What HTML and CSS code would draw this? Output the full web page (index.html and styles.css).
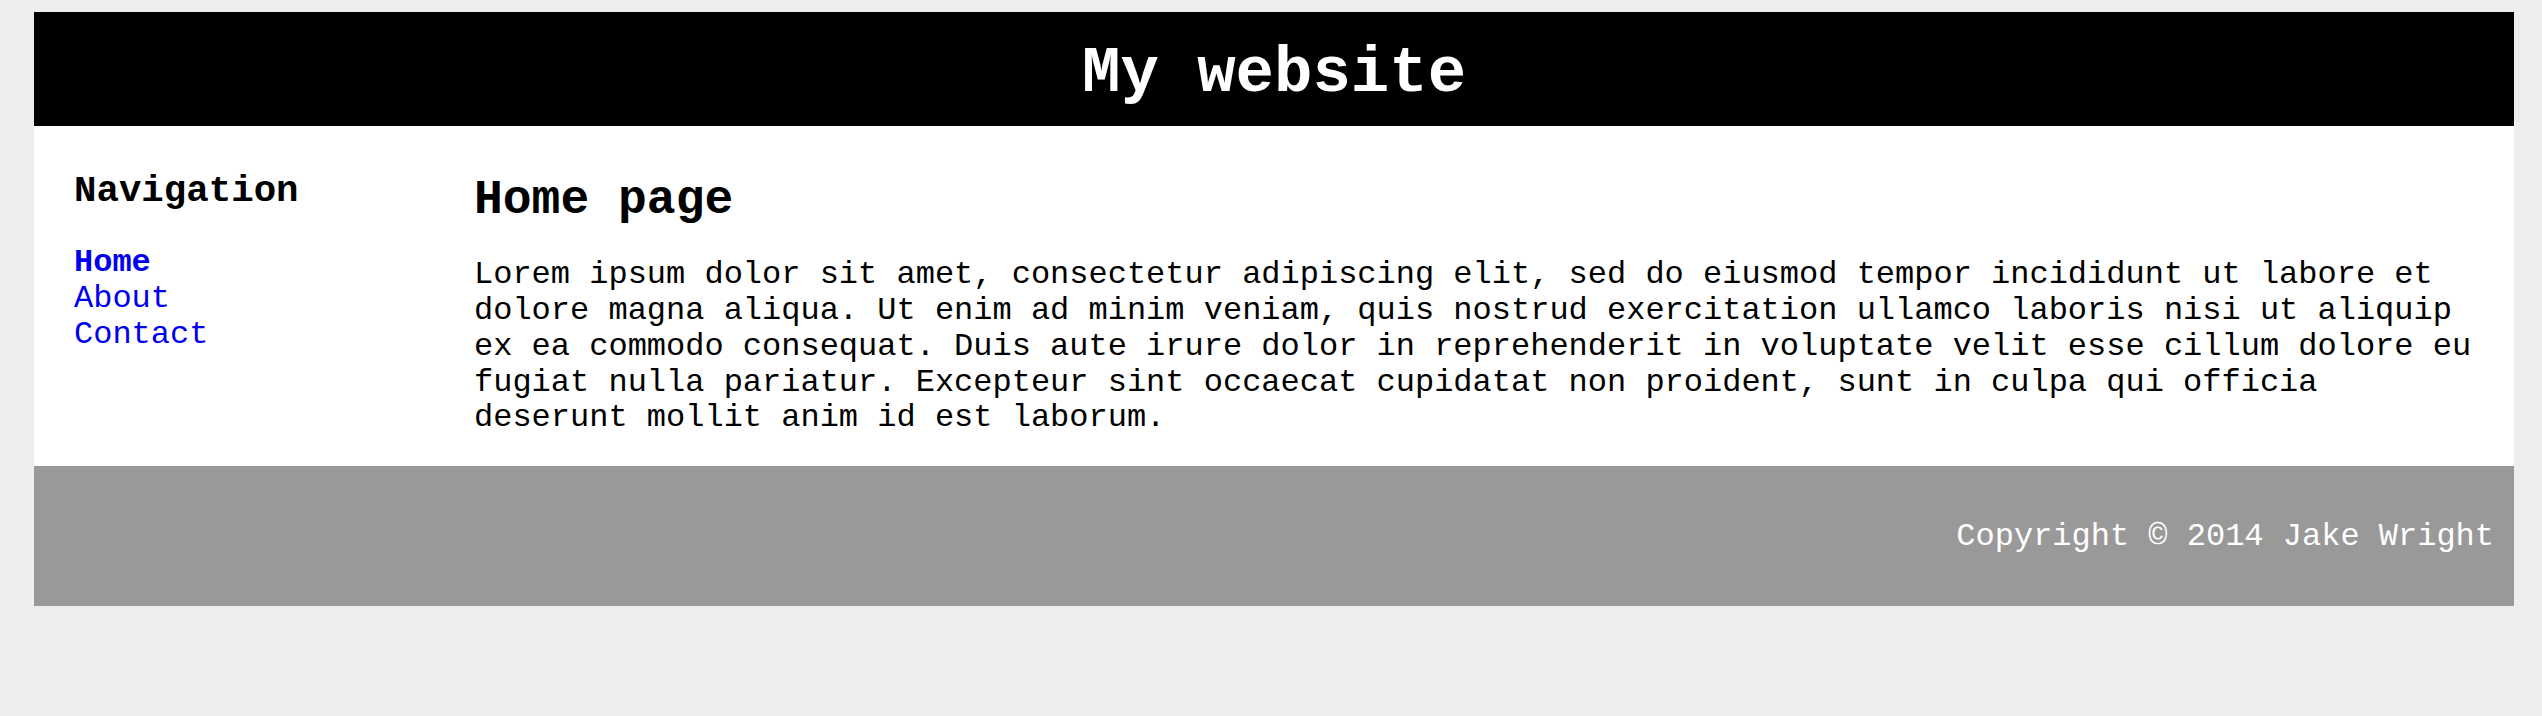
FILE: index.html
```html
<!DOCTYPE html>
<html lang="en">
<head>
<meta charset="utf-8">
<title>My website</title>
<link rel="stylesheet" href="styles.css">
</head>
<body>
<div class="container">
  <header class="site-header">
    <h1 class="site-title">My website</h1>
  </header>
  <div class="main">
    <nav class="sidebar">
      <h3 class="sidebar-title">Navigation</h3>
      <ul class="nav-list">
        <li><a class="nav-link active" href="#">Home</a></li>
        <li><a class="nav-link" href="#">About</a></li>
        <li><a class="nav-link" href="#">Contact</a></li>
      </ul>
    </nav>
    <section class="content">
      <h2 class="content-title">Home page</h2>
      <p class="content-text">Lorem ipsum dolor sit amet, consectetur adipiscing elit, sed do eiusmod tempor incididunt ut labore et dolore magna aliqua. Ut enim ad minim veniam, quis nostrud exercitation ullamco laboris nisi ut aliquip ex ea commodo consequat. Duis aute irure dolor in reprehenderit in voluptate velit esse cillum dolore eu fugiat nulla pariatur. Excepteur sint occaecat cupidatat non proident, sunt in culpa qui officia deserunt mollit anim id est laborum.</p>
    </section>
  </div>
  <footer class="site-footer">
    <p class="copyright">Copyright &copy; 2014 Jake Wright</p>
  </footer>
</div>
</body>
</html>
```

FILE: styles.css
```css
html, body {
  margin: 0;
  padding: 0;
}

body {
  background: #ededed;
  font-family: "Liberation Mono", "Courier New", monospace;
  font-size: 32px;
  line-height: 35.75px;
  color: #000;
}

.container {
  margin: 12px 28px 0 34px;
}

.site-header {
  background: #000;
  padding: 26px 0 16px;
}

.site-title {
  margin: 0;
  color: #fff;
  font-size: 64px;
  font-weight: bold;
  line-height: 72px;
  text-align: center;
}

.main {
  display: flex;
  background: #fff;
}

.sidebar {
  width: 400px;
  flex: 0 0 400px;
  box-sizing: border-box;
  padding: 0 0 0 40px;
}

.sidebar-title {
  margin: 44px 0 33px;
  font-size: 37.44px;
  font-weight: bold;
  line-height: 42.4px;
}

.nav-list {
  list-style: none;
  margin: 0;
  padding: 0;
}

.nav-link {
  color: #0000ee;
  text-decoration: none;
}

.nav-link.active {
  font-weight: bold;
}

.content {
  flex: 1;
  padding: 0 40px;
  min-width: 0;
}

.content-title {
  margin: 47px 0 30px;
  font-size: 48px;
  font-weight: bold;
  line-height: 54.4px;
}

.content-text {
  margin: 0 0 30px;
}

.site-footer {
  background: #999;
  padding: 53px 20px 51.25px;
  text-align: right;
}

.copyright {
  margin: 0;
  color: #fff;
}
```
